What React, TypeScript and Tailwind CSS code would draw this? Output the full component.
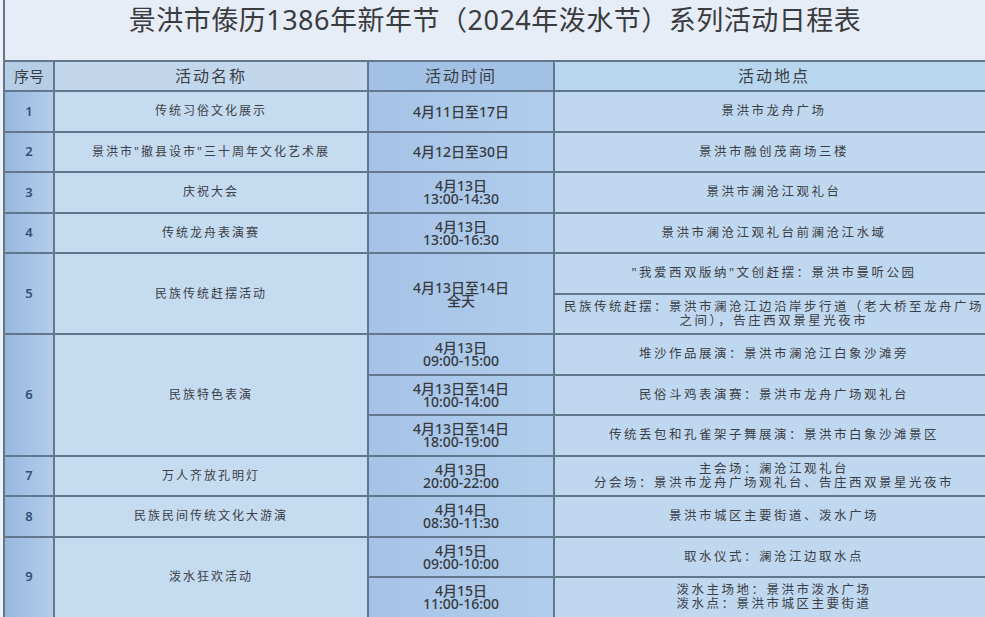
const line = '#62768d';

type Cell = { text: string; col: 'no' | 'name' | 'time' | 'loc'; span?: 1 | 2 | 3 };

const rows: Cell[] = [
  { text: '1', col: 'no' },
  { text: '传统习俗文化展示', col: 'name' },
  { text: '4月11日至17日', col: 'time' },
  { text: '景洪市龙舟广场', col: 'loc' },
  { text: '2', col: 'no' },
  { text: '景洪市"撤县设市"三十周年文化艺术展', col: 'name' },
  { text: '4月12日至30日', col: 'time' },
  { text: '景洪市融创茂商场三楼', col: 'loc' },
  { text: '3', col: 'no' },
  { text: '庆祝大会', col: 'name' },
  { text: '4月13日\n13:00-14:30', col: 'time' },
  { text: '景洪市澜沧江观礼台', col: 'loc' },
  { text: '4', col: 'no' },
  { text: '传统龙舟表演赛', col: 'name' },
  { text: '4月13日\n13:00-16:30', col: 'time' },
  { text: '景洪市澜沧江观礼台前澜沧江水域', col: 'loc' },
  { text: '5', col: 'no', span: 2 },
  { text: '民族传统赶摆活动', col: 'name', span: 2 },
  { text: '4月13日至14日\n全天', col: 'time', span: 2 },
  { text: '"我爱西双版纳"文创赶摆：景洪市曼听公园', col: 'loc' },
  { text: '民族传统赶摆：景洪市澜沧江边沿岸步行道（老大桥至龙舟广场\n之间），告庄西双景星光夜市', col: 'loc' },
  { text: '6', col: 'no', span: 3 },
  { text: '民族特色表演', col: 'name', span: 3 },
  { text: '4月13日\n09:00-15:00', col: 'time' },
  { text: '堆沙作品展演：景洪市澜沧江白象沙滩旁', col: 'loc' },
  { text: '4月13日至14日\n10:00-14:00', col: 'time' },
  { text: '民俗斗鸡表演赛：景洪市龙舟广场观礼台', col: 'loc' },
  { text: '4月13日至14日\n18:00-19:00', col: 'time' },
  { text: '传统丢包和孔雀架子舞展演：景洪市白象沙滩景区', col: 'loc' },
  { text: '7', col: 'no' },
  { text: '万人齐放孔明灯', col: 'name' },
  { text: '4月13日\n20:00-22:00', col: 'time' },
  { text: '主会场：澜沧江观礼台\n分会场：景洪市龙舟广场观礼台、告庄西双景星光夜市', col: 'loc' },
  { text: '8', col: 'no' },
  { text: '民族民间传统文化大游演', col: 'name' },
  { text: '4月14日\n08:30-11:30', col: 'time' },
  { text: '景洪市城区主要街道、泼水广场', col: 'loc' },
  { text: '9', col: 'no', span: 2 },
  { text: '泼水狂欢活动', col: 'name', span: 2 },
  { text: '4月15日\n09:00-10:00', col: 'time' },
  { text: '取水仪式：澜沧江边取水点', col: 'loc' },
  { text: '4月15日\n11:00-16:00', col: 'time' },
  { text: '泼水主场地：景洪市泼水广场\n泼水点：景洪市城区主要街道', col: 'loc' },
];

const colStyle = {
  no: 'bg-gradient-to-r from-[#98b8df] to-[#b3cdea] text-[#34506f] text-[13px] font-semibold',
  name: 'bg-[#c5dbf0] text-[#3c4046] text-[12px] tracking-[2px]',
  time: 'bg-gradient-to-r from-[#a6c3e7] to-[#b1cdeb] text-[#363b42] text-[14px] leading-[13px] font-medium',
  loc: 'bg-[#c0d8ef] text-[#3c4046] text-[12.5px] tracking-[2.5px] leading-[14px]',
};

const spanClass = { 1: '', 2: 'row-span-2', 3: 'row-span-3' };

export default function App() {
  return (
    <div className="w-[985px] h-[617px] overflow-hidden bg-[#eef2f8] font-['Noto_Sans','Noto_Sans_CJK_SC',sans-serif]">
      <div className="ml-[3px] h-full border-l-2 border-[#62768d] bg-[#e6edf6]">
        <div className="h-[60px] flex items-start justify-center pt-[0px] text-[27px] text-[#3a3c40] tracking-[0.5px]">
          景洪市傣历1386年新年节（2024年泼水节）系列活动日程表
        </div>
        <div
          className="grid w-[988px] grid-cols-[48px_312px_184px_438px] grid-rows-[28px_repeat(13,38.5px)] gap-[2px] pt-[2px]"
          style={{ backgroundColor: line }}
        >
          <div className="flex items-center justify-center bg-[#b6cde6] text-[15px] text-[#3a3f46]">序号</div>
          <div className="flex items-center justify-center bg-[#c3d7ec] text-[16px] tracking-[2px] text-[#3a3f46]">活动名称</div>
          <div className="flex items-center justify-center bg-[#a3c1e4] text-[16px] tracking-[2px] text-[#3a3f46]">活动时间</div>
          <div className="flex items-center justify-center bg-[#b8d6ee] text-[16px] tracking-[2px] text-[#3a3f46]">活动地点</div>
          {rows.map((c, i) => (
            <div
              key={i}
              className={`flex items-center justify-center text-center whitespace-pre ${colStyle[c.col]} ${spanClass[c.span ?? 1]}`}
            >
              {c.text}
            </div>
          ))}
        </div>
      </div>
    </div>
  );
}
